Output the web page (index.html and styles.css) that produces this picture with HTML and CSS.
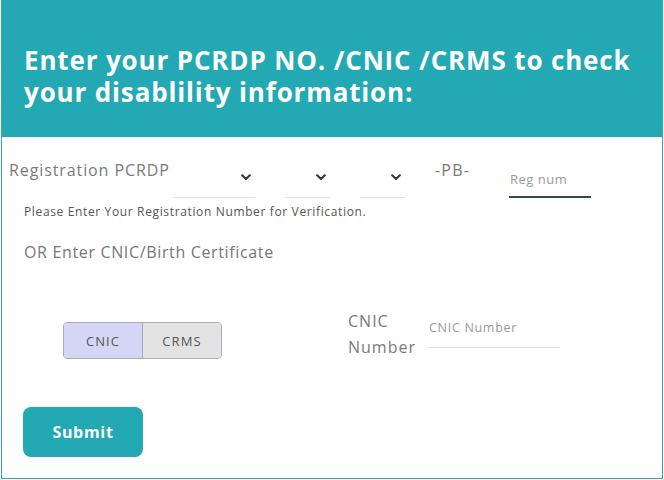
FILE: index.html
```html
<!DOCTYPE html>
<html lang="en">
<head>
<meta charset="utf-8">
<title>PCRDP Verification</title>
<link rel="stylesheet" href="styles.css">
</head>
<body>
<div class="page">
  <header class="hero">
    <h1 class="hero-title">Enter your PCRDP NO. /CNIC /CRMS to check your disablility information:</h1>
  </header>
  <form class="form" onsubmit="return false">
    <div class="reg-row">
      <label class="reg-label">Registration PCRDP</label>
      <div class="sel sel-wide"><svg class="chev" viewBox="0 0 10 7" width="10" height="7"><path d="M1.2 1.3 L5 5 L8.8 1.3" fill="none" stroke="#3a3a3a" stroke-width="2.2" stroke-linecap="round" stroke-linejoin="round"/></svg></div>
      <div class="sel"><svg class="chev" viewBox="0 0 10 7" width="10" height="7"><path d="M1.2 1.3 L5 5 L8.8 1.3" fill="none" stroke="#3a3a3a" stroke-width="2.2" stroke-linecap="round" stroke-linejoin="round"/></svg></div>
      <div class="sel"><svg class="chev" viewBox="0 0 10 7" width="10" height="7"><path d="M1.2 1.3 L5 5 L8.8 1.3" fill="none" stroke="#3a3a3a" stroke-width="2.2" stroke-linecap="round" stroke-linejoin="round"/></svg></div>
      <span class="pb">-PB-</span>
      <div class="reg-input"><span class="ph">Reg num</span></div>
    </div>
    <p class="hint">Please Enter Your Registration Number for Verification.</p>
    <p class="or">OR Enter CNIC/Birth Certificate</p>
    <div class="cnic-row">
      <div class="toggle">
        <span class="tog tog-on">CNIC</span>
        <span class="tog tog-off">CRMS</span>
      </div>
      <label class="cnic-label">CNIC<br>Number</label>
      <div class="cnic-input"><span class="ph ph-sm">CNIC Number</span></div>
    </div>
    <button class="submit" type="submit">Submit</button>
  </form>
</div>
</body>
</html>
```

FILE: styles.css
```css
* { box-sizing: border-box; }
body {
  margin: 0;
  background: #ffffff;
  font-family: "Open Sans", "Noto Sans", sans-serif;
}
.page {
  margin-left: 1px;
  width: 662px;
  height: 479px;
  border: 1px solid #33a6ae;
  border-top: 0;
}
.hero {
  background: #22a9b4;
  height: 137px;
  padding: 44px 0 0 22px;
}
.hero-title {
  margin: 0;
  color: #ffffff;
  font-family: "Open Sans", sans-serif;
  font-weight: 700;
  font-size: 26px;
  line-height: 32px;
  letter-spacing: 0.85px;
}
.form { display: block; }
.reg-row {
  display: flex;
  align-items: flex-start;
  margin-top: 21px;
  padding-left: 7px;
  height: 40px;
}
.reg-label {
  width: 164px;
  font-size: 16px;
  line-height: 24px;
  letter-spacing: 0.9px;
  color: #7a7a7a;
  white-space: nowrap;
}
.sel {
  width: 45px;
  height: 40px;
  margin-right: 30px;
  border-bottom: 1px solid #e2e2e2;
  display: flex;
  align-items: center;
  justify-content: flex-end;
  padding-right: 4px;
}
.sel-wide { width: 82px; }
.chev { display: block; }
.pb {
  width: 74px;
  font-size: 16px;
  line-height: 24px;
  letter-spacing: 1.2px;
  color: #7a7a7a;
}
.reg-input {
  width: 82px;
  height: 40px;
  border-bottom: 2px solid #2e4b4b;
  display: flex;
  align-items: flex-end;
  padding: 0 0 9px 1px;
}
.ph {
  font-size: 13px;
  line-height: 16px;
  letter-spacing: 0.5px;
  color: #9a9a9a;
  white-space: nowrap;
}
.ph-sm { font-size: 12.5px; letter-spacing: 0.7px; }
.hint {
  margin: 6px 0 0 22px;
  font-size: 12px;
  line-height: 16px;
  letter-spacing: 0.64px;
  color: #555555;
}
.or {
  margin: 20px 0 0 22px;
  font-size: 16px;
  line-height: 24px;
  letter-spacing: 0.65px;
  color: #777777;
}
.cnic-row {
  display: flex;
  align-items: flex-start;
  margin-top: 44px;
  padding-left: 61px;
  height: 52px;
}
.toggle {
  display: flex;
  margin-top: 14px;
  height: 37px;
  border: 1px solid #ababbb;
  border-radius: 4px;
  overflow: hidden;
}
.tog {
  display: flex;
  align-items: center;
  justify-content: center;
  font-size: 13px;
  letter-spacing: 1.1px;
  color: #555555;
}
.tog-on {
  width: 79px;
  background: #d5d5f6;
  border-right: 1px solid #a9a9bb;
}
.tog-off {
  width: 78px;
  background: #e3e3e3;
}
.cnic-label {
  margin-left: 126px;
  width: 81px;
  font-size: 16px;
  line-height: 26px;
  letter-spacing: 1px;
  color: #7a7a7a;
}
.cnic-input {
  width: 131px;
  height: 40px;
  border-bottom: 1px solid #dddddd;
  display: flex;
  align-items: flex-end;
  padding-bottom: 11px;
}
.submit {
  display: block;
  margin: 47px 0 0 21px;
  width: 120px;
  height: 50px;
  border: 0;
  border-radius: 8px;
  background: #22a9b4;
  color: #ffffff;
  font-family: "Open Sans", sans-serif;
  font-weight: 700;
  font-size: 16px;
  letter-spacing: 0.7px;
  cursor: pointer;
}
```
